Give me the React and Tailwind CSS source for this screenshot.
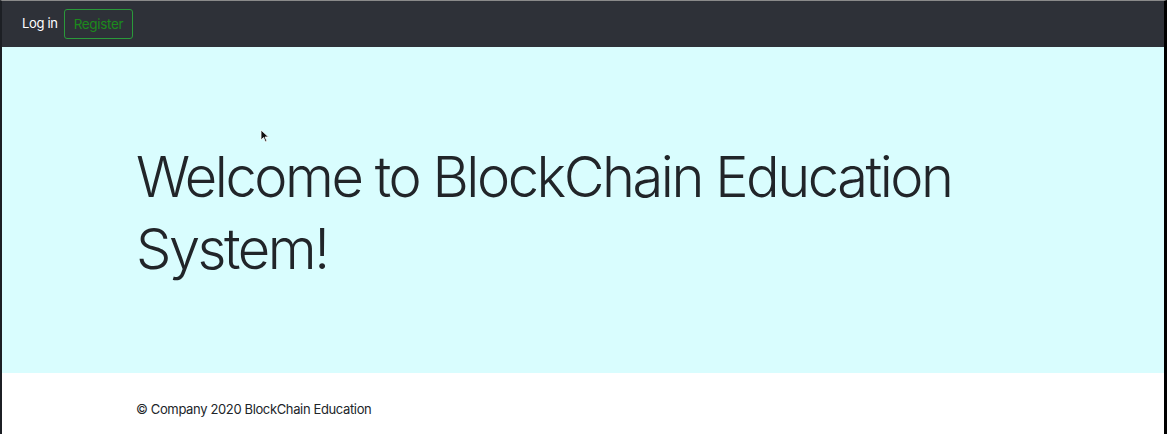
import React from "react";

const font = { fontFamily: "Inter, 'Helvetica Neue', Arial, sans-serif" };

export default function App() {
  return (
    <div
      className="relative w-[1167px] h-[434px] overflow-hidden bg-white border-l-2 border-r-[3px] border-t border-l-[#1c1f24] border-r-black border-t-[#8a8a8a]"
      style={font}
    >
      {/* Navbar */}
      <nav className="h-[46px] bg-[#2e3138] flex items-center pl-[20px] gap-[6px]">
        <a className="text-white text-[13px] tracking-tight">Log in</a>
        <button className="h-[30px] px-[9px] rounded-[3px] border border-[#2a9a3a] text-[#1c8a1c] text-[13.5px] tracking-tight">
          Register
        </button>
      </nav>

      {/* Hero */}
      <section className="relative h-[326px] bg-[#d9fdfe] pl-[134px] pt-[94px]">
        <h1 className="text-[56px] leading-[72px] font-light text-[#212529] tracking-[-0.044em]">
          Welcome to BlockChain Education
          <br />
          System!
        </h1>
        <svg
          className="absolute left-[258px] top-[82px]"
          width="10"
          height="14"
          viewBox="0 0 10 14"
        >
          <path d="M1 1 L1 11 L3.5 8.5 L5.5 13 L7 12.3 L5 8 L8.5 8 Z" fill="#111" stroke="#fff" strokeWidth="0.8" />
        </svg>
      </section>

      {/* Footer */}
      <footer className="pl-[134px] pt-[27px] text-[13px] text-[#212529] tracking-[-0.028em]">
        © Company 2020 BlockChain Education
      </footer>
    </div>
  );
}
